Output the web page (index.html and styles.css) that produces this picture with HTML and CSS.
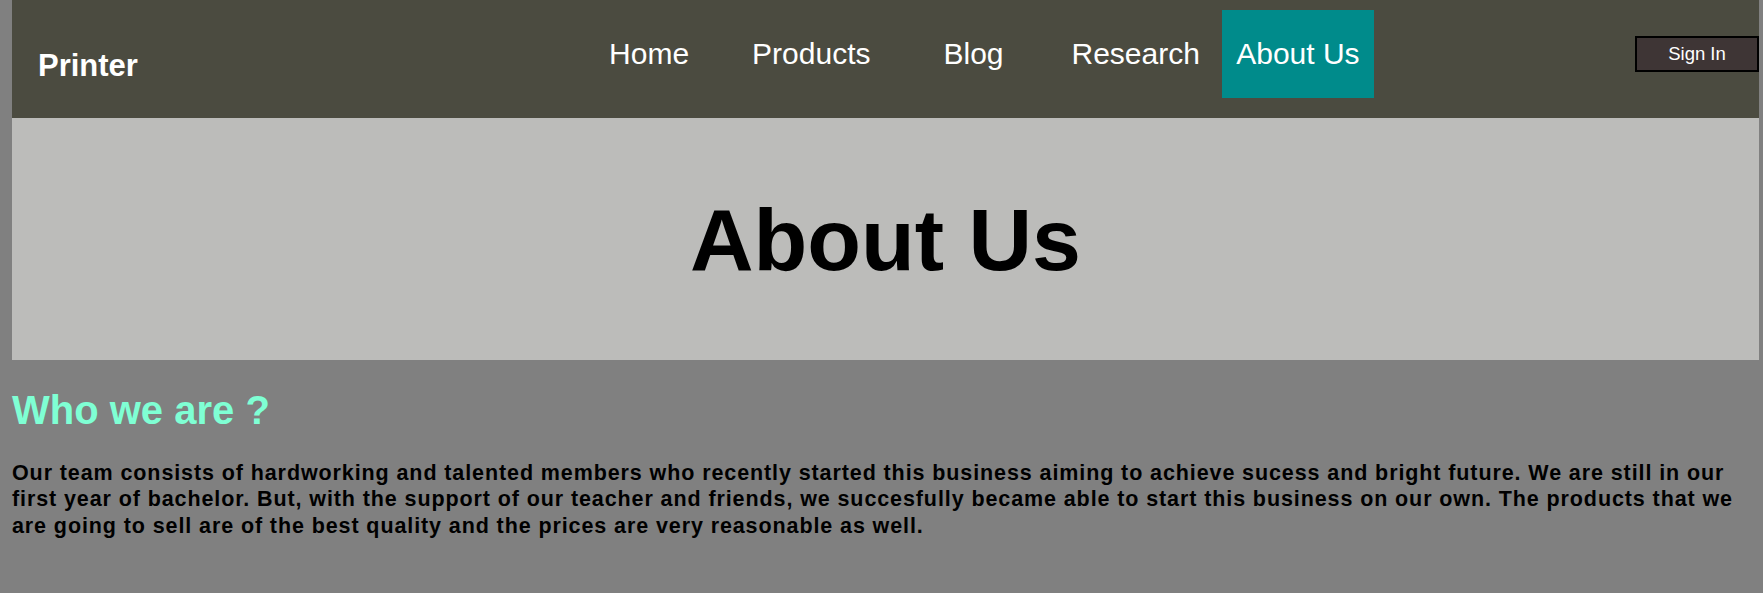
FILE: index.html
```html
<!DOCTYPE html>
<html lang="en">
<head>
<meta charset="utf-8">
<title>About Us - Printer</title>
<link rel="stylesheet" href="styles.css">
</head>
<body>
<header class="site-header">
  <div class="logo">Printer</div>
  <nav class="main-nav">
    <ul class="nav-list">
      <li class="nav-item"><a class="nav-link" href="#">Home</a></li>
      <li class="nav-item"><a class="nav-link" href="#">Products</a></li>
      <li class="nav-item"><a class="nav-link" href="#">Blog</a></li>
      <li class="nav-item"><a class="nav-link" href="#">Research</a></li>
      <li class="nav-item"><a class="nav-link active" href="#">About Us</a></li>
    </ul>
  </nav>
  <button class="sign-in" type="button">Sign In</button>
</header>
<section class="hero">
  <h1 class="hero-title">About Us</h1>
</section>
<main class="content">
  <h2 class="section-title">Who we are ?</h2>
  <p class="section-text">Our team consists of hardworking and talented members who recently started this business aiming to achieve sucess and bright future. We are still in our first year of bachelor. But, with the support of our teacher and friends, we succesfully became able to start this business on our own. The products that we are going to sell are of the best quality and the prices are very reasonable as well.</p>
</main>
</body>
</html>
```
FILE: styles.css
```css
html, body {
  margin: 0;
  padding: 0;
}

body {
  background: #808080;
  font-family: "Liberation Sans", Arial, sans-serif;
  padding: 0 4px 0 12px;
  min-height: 593px;
  box-sizing: border-box;
}

.site-header {
  display: grid;
  grid-template-columns: 556px 811px 1fr;
  align-items: start;
  height: 118px;
  background: #4b4b40;
}

.logo {
  color: #ffffff;
  font-weight: bold;
  font-size: 31px;
  padding: 48px 0 0 26px;
}

.nav-list {
  display: flex;
  list-style: none;
  margin: 10px 0 0;
  padding: 0;
}

.nav-item {
  width: 162.25px;
  display: flex;
  justify-content: center;
}

.nav-link {
  display: block;
  color: #ffffff;
  text-decoration: none;
  font-size: 30px;
  line-height: 34.5px;
  padding: 27px 14px 26px;
}

.nav-link.active {
  background: #008b8b;
}

.sign-in {
  justify-self: end;
  margin-top: 36px;
  width: 124px;
  height: 36px;
  box-sizing: border-box;
  background: #3e3535;
  border: 2px solid #000000;
  color: #ffffff;
  font-family: "Liberation Sans", Arial, sans-serif;
  font-size: 18.5px;
  padding: 0;
}

.hero {
  background: #bcbcba;
  padding: 72px 0 70px;
}

.hero-title {
  margin: 0;
  text-align: center;
  font-size: 88px;
  font-weight: bold;
  color: #000000;
  line-height: 100px;
}

.section-title {
  margin: 27px 0 0;
  color: #7fffd4;
  font-size: 40px;
  line-height: 46px;
  font-weight: bold;
}

.section-text {
  margin: 26.5px 0 0;
  font-size: 21.5px;
  font-weight: bold;
  letter-spacing: 0.9px;
  line-height: 26.67px;
  color: #000000;
}
```
